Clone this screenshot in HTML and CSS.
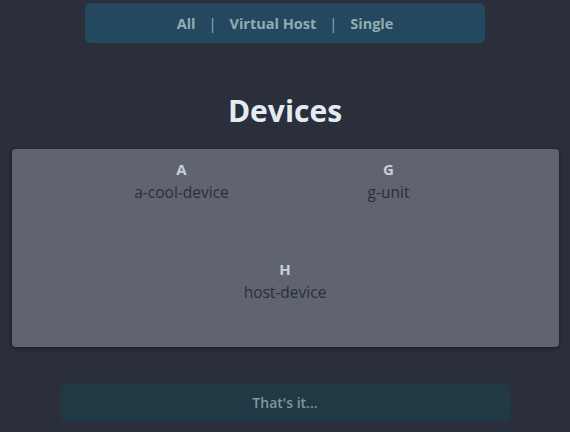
FILE: index.html
```html
<!DOCTYPE html>
<html>
<head>
<meta charset="utf-8">
<link rel="stylesheet" href="styles.css">
</head>
<body>
<nav class="filter">
  <a class="filter-link">All</a>
  <span class="sep">|</span>
  <a class="filter-link">Virtual Host</a>
  <span class="sep">|</span>
  <a class="filter-link">Single</a>
</nav>
<h1 class="title">Devices</h1>
<section class="card">
  <div class="device"><div class="letter">A</div><div class="name">a-cool-device</div></div>
  <div class="device"><div class="letter">G</div><div class="name">g-unit</div></div>
  <div class="device"><div class="letter">H</div><div class="name">host-device</div></div>
</section>
<footer class="end">That's it...</footer>
</body>
</html>
```
FILE: styles.css
```css
html, body {
  margin: 0;
  padding: 0;
  background: #2a2f3b;
  font-family: "Open Sans", "Noto Sans", sans-serif;
}
body {
  width: 570px;
  height: 432px;
  overflow: hidden;
  display: flex;
  flex-direction: column;
  align-items: center;
}
.filter {
  margin-top: 3px;
  width: 400px;
  height: 40px;
  box-sizing: border-box;
  background: #23485f;
  border-radius: 6px;
  display: flex;
  align-items: center;
  justify-content: center;
  gap: 13px;
  color: #93abb2;
  font-weight: 700;
  font-size: 14.5px;
}
.sep { font-weight: 400; }
.title {
  margin: 46px 0 0 0;
  height: 44px;
  line-height: 44px;
  font-size: 30px;
  font-weight: 700;
  color: #e4ecf2;
}
.card {
  margin-top: 16px;
  width: 547px;
  height: 198px;
  box-sizing: border-box;
  background: #5f6470;
  border-radius: 4px;
  box-shadow: 0 1px 4px rgba(0,0,0,0.45);
  padding: 10px 0 0 0;
  display: flex;
  flex-wrap: wrap;
  justify-content: center;
  align-content: flex-start;
  row-gap: 20px;
}
.device {
  width: 207px;
  height: 80px;
  display: flex;
  flex-direction: column;
  align-items: center;
}
.letter {
  height: 20px;
  line-height: 20px;
  font-size: 15px;
  font-weight: 700;
  color: #c9d1db;
}
.name {
  height: 26px;
  line-height: 26px;
  font-size: 15.5px;
  color: #2b2f3d;
}
.end {
  margin-top: 36px;
  width: 451px;
  height: 39px;
  background: #213845;
  border-radius: 8px;
  display: flex;
  align-items: center;
  justify-content: center;
  color: #7f989d;
  font-size: 14px;
  font-weight: 600;
}
```
